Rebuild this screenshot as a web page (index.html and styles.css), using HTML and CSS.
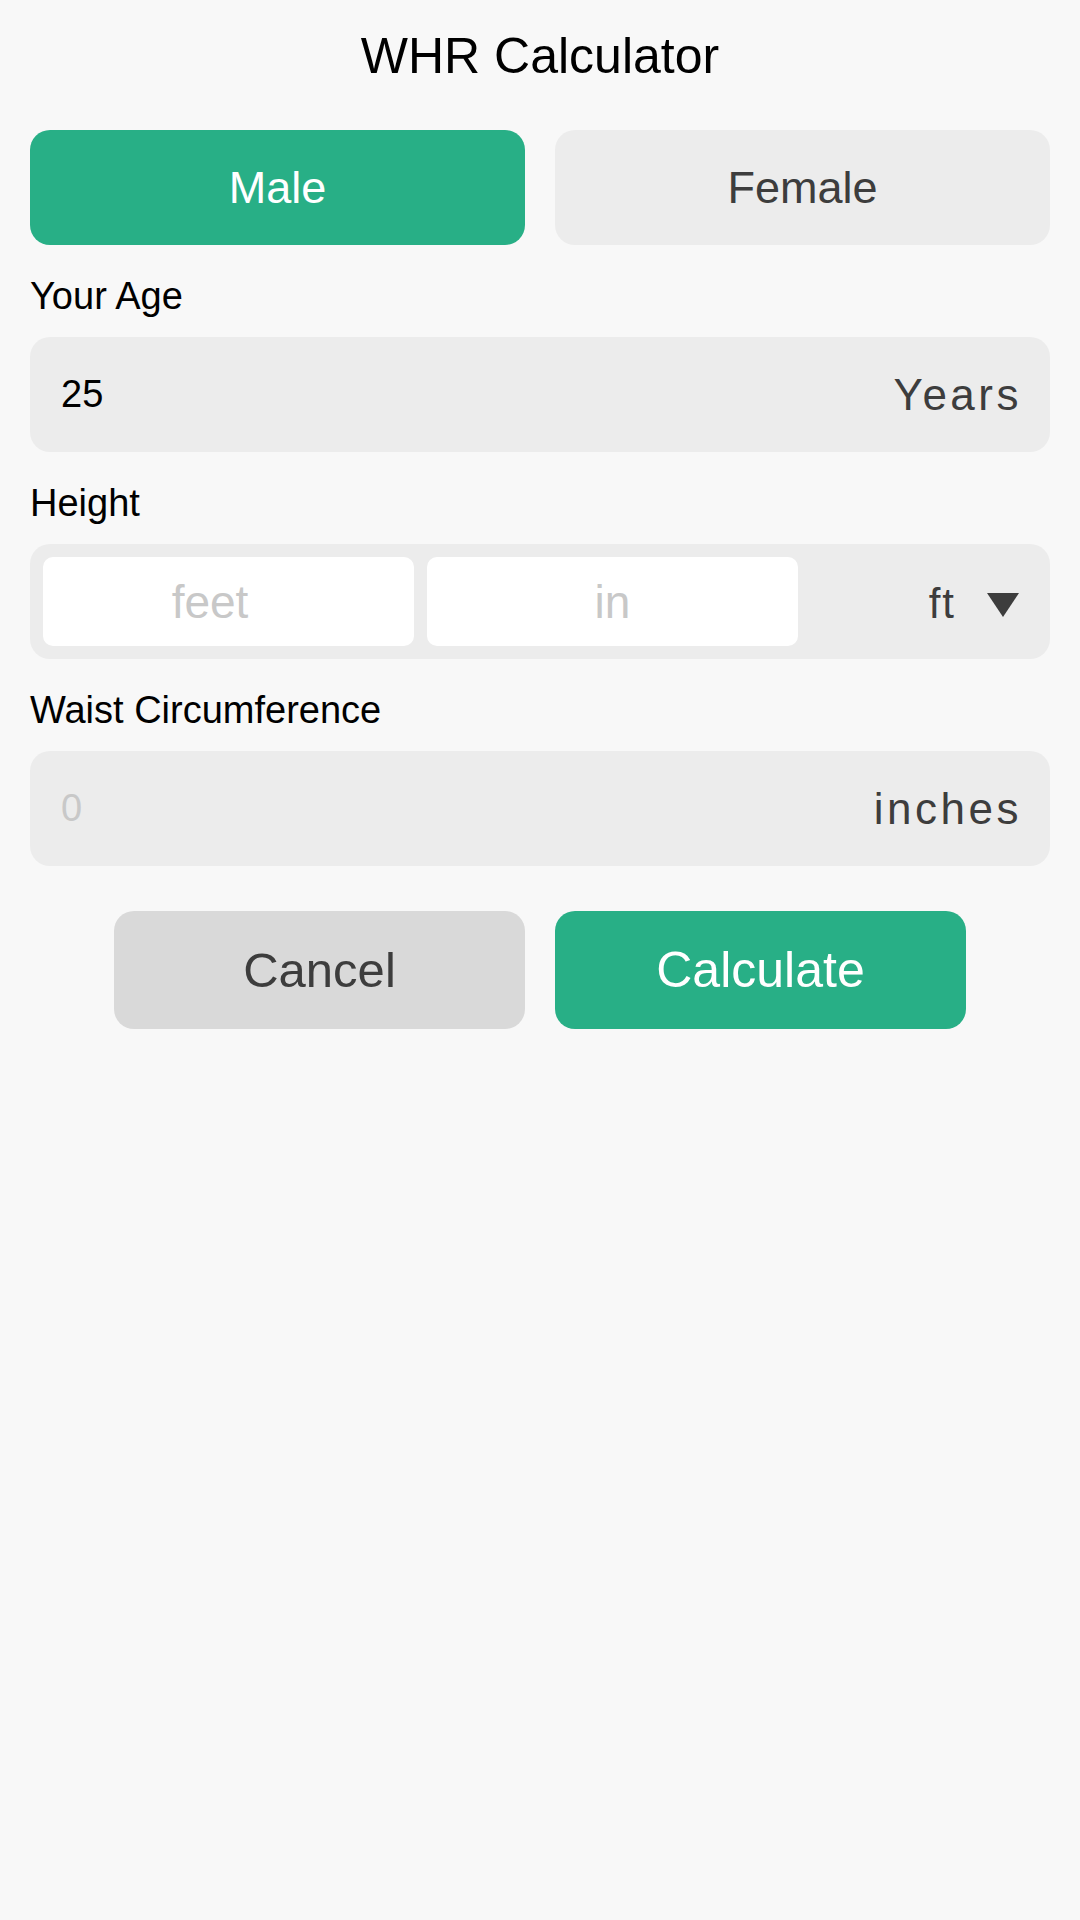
FILE: index.html
```html
<!DOCTYPE html>
<html lang="en">
<head>
<meta charset="utf-8">
<title>WHR Calculator</title>
<link rel="stylesheet" href="styles.css">
</head>
<body>
<div class="page">
  <h1 class="title">WHR Calculator</h1>

  <div class="gender-row">
    <div class="seg seg-active">Male</div>
    <div class="seg">Female</div>
  </div>

  <div class="label">Your Age</div>
  <div class="field">
    <span class="value">25</span>
    <span class="unit">Years</span>
  </div>

  <div class="label">Height</div>
  <div class="field field-height">
    <div class="subinput subinput-feet"><span class="hint">feet</span></div>
    <div class="subinput"><span class="hint">in</span></div>
    <div class="spinner">
      <span class="spinner-text">ft</span>
      <svg class="caret" width="32" height="24" viewBox="0 0 32 24"><polygon points="0,0 32,0 16,24" fill="#3d3d3d"/></svg>
    </div>
  </div>

  <div class="label">Waist Circumference</div>
  <div class="field">
    <span class="value value-hint">0</span>
    <span class="unit">inches</span>
  </div>

  <div class="action-row">
    <div class="btn btn-cancel">Cancel</div>
    <div class="btn btn-primary">Calculate</div>
  </div>
</div>
</body>
</html>
```

FILE: styles.css
```css
* { box-sizing: border-box; }

html, body {
  margin: 0;
  padding: 0;
  background: #f8f8f8;
}

body {
  width: 1080px;
  min-height: 1920px;
  font-family: "Liberation Sans", Arial, sans-serif;
  color: #000;
}

.page {
  padding: 0 30px;
}

.title {
  margin: 0;
  padding-top: 31px;
  font-size: 50px;
  line-height: 50px;
  font-weight: normal;
  text-align: center;
  color: #000;
}

.gender-row {
  margin-top: 49px;
  display: flex;
  gap: 30px;
}

.seg {
  flex: 1;
  height: 115px;
  border-radius: 20px;
  background: #ececec;
  color: #3d3d3d;
  font-size: 45px;
  display: flex;
  align-items: center;
  justify-content: center;
}

.seg-active {
  background: #28af86;
  color: #fff;
}

.label {
  margin-top: 33px;
  margin-bottom: 22px;
  font-size: 38px;
  line-height: 37px;
  color: #000;
}

.field {
  height: 115px;
  border-radius: 20px;
  background: #ececec;
  display: flex;
  align-items: center;
  justify-content: space-between;
  padding: 0 28px 0 31px;
}

.value {
  font-size: 38px;
  color: #000;
}

.value-hint {
  color: #c8c8c8;
}

.unit {
  font-size: 44px;
  letter-spacing: 3.5px;
  color: #3d3d3d;
}

.field-height {
  padding: 13px 31px 13px 13px;
  gap: 13px;
  justify-content: flex-start;
}

.subinput {
  width: 371px;
  height: 89px;
  background: #fff;
  border-radius: 10px;
  display: flex;
  align-items: center;
  justify-content: center;
}

.subinput-feet {
  padding-right: 37px;
}

.hint {
  font-size: 46px;
  color: #c8c8c8;
}

.spinner {
  flex: 1;
  display: flex;
  align-items: center;
  justify-content: flex-end;
  gap: 31px;
}

.spinner-text {
  font-size: 42px;
  line-height: 42px;
  letter-spacing: 2px;
  color: #3d3d3d;
  margin-top: 4px;
}

.caret {
  display: block;
  margin-top: 6px;
}

.action-row {
  margin-top: 45px;
  display: flex;
  justify-content: center;
  gap: 30px;
}

.btn {
  width: 411px;
  height: 118px;
  border-radius: 20px;
  display: flex;
  align-items: center;
  justify-content: center;
  font-size: 49px;
}

.btn-cancel {
  background: #d9d9d9;
  color: #3d3d3d;
}

.btn-primary {
  background: #28af86;
  color: #fff;
  font-size: 50px;
}
```
